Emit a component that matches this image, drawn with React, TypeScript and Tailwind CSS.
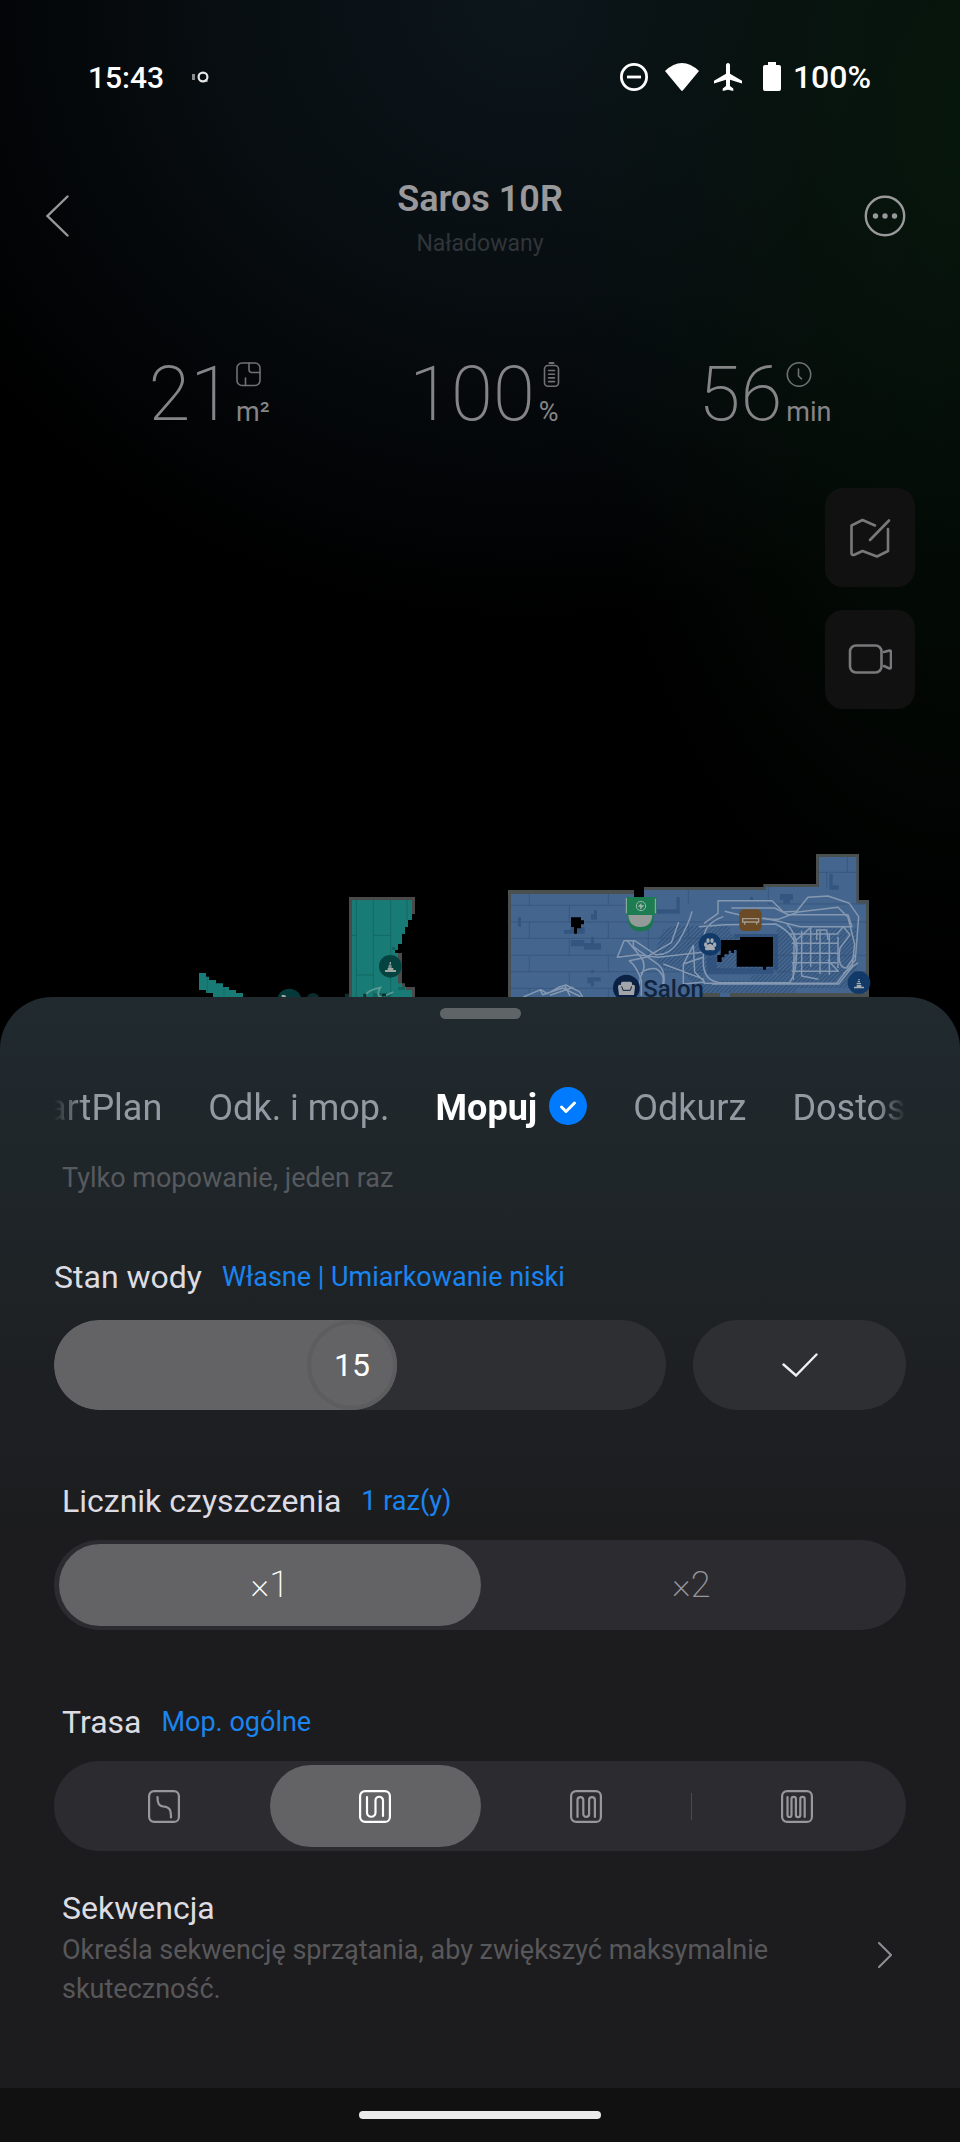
import { useState } from "react";
import type { ReactNode } from "react";

const tabs = ["SmartPlan", "Odk. i mop.", "Mopuj", "Odkurz", "Dostosuj"];

const StatusBar = () => (
  <div className="flex h-[154px] items-center justify-between pl-[88px] pr-[89px] font-medium text-white">
    <div className="flex items-center gap-7">
      <span className="text-[30px]">15:43</span>
      <svg width="18" height="12" viewBox="0 0 18 12" fill="none">
        <path d="M1.500 3v6" stroke="#8a8d90" strokeWidth="3" />
        <circle cx="11" cy="6" r="4.400" stroke="#e8e8e8" strokeWidth="2.200" />
        <path d="M13 8.500l2.500 2" stroke="#e8e8e8" strokeWidth="1.500" />
      </svg>
    </div>
    <div className="flex items-center">
      <svg width="28" height="28" viewBox="0 0 28 28" fill="none" stroke="#fff" strokeWidth="2.800">
        <circle cx="14" cy="14" r="12.600" />
        <path d="M7 14h14" />
      </svg>
      <svg className="ml-[17px]" width="34" height="28" viewBox="0 0 34 28" fill="#fff">
        <path d="M0 8Q17-8 34 8L18 27.300Q17 28.500 16 27.300Z" />
      </svg>
      <svg className="ml-[15px]" width="28" height="29" viewBox="0 0 28 29" fill="#fff">
        <path d="M14 0c1.300 0 2 1 2 2.300v8.500l12 7v2.700l-12-3.700v6.200l3.300 2.500V28L14 26.700 8.700 28v-2.500L12 23v-6.200L0 20.500v-2.700l12-7V2.300C12 1 12.700 0 14 0z" />
      </svg>
      <svg className="ml-[21px]" width="18" height="30" viewBox="0 0 18 30" fill="#fff">
        <path d="M5 0h8v3h3a2 2 0 0 1 2 2v22a2 2 0 0 1-2 2H2a2 2 0 0 1-2-2V5a2 2 0 0 1 2-2h3z" />
      </svg>
      <span className="ml-3 text-[32px]">100%</span>
    </div>
  </div>
);

const Header = () => (
  <header className="flex h-[124px] items-center justify-between px-[46px] text-[#99999b]">
    <button aria-label="Wstecz" className="flex w-[60px] justify-start">
      <svg width="23" height="42" viewBox="0 0 23 42" fill="none" stroke="currentColor" strokeWidth="2.400" strokeLinecap="round">
        <path d="M21.500 1.500L1.500 21l20 19.500" />
      </svg>
    </button>
    <div className="pt-1.5 text-center">
      <h1 className="text-[36px] leading-[42px] font-semibold">Saros 10R</h1>
      <p className="mt-2 text-[23px] leading-8 text-[#303539]">Naładowany</p>
    </div>
    <button aria-label="Więcej" className="flex w-[60px] justify-end pr-2">
      <svg width="42" height="42" viewBox="0 0 42 42" fill="none">
        <circle cx="21" cy="21" r="19.200" stroke="currentColor" strokeWidth="2.400" />
        <g fill="currentColor">
          <circle cx="11.500" cy="21" r="2.700" />
          <circle cx="21" cy="21" r="2.700" />
          <circle cx="30.500" cy="21" r="2.700" />
        </g>
      </svg>
    </button>
  </header>
);

const Stat = ({ value, unit, children }: { value: string; unit: string; children: ReactNode }) => (
  <div className="flex justify-center gap-1 text-[#858588]">
    <span className="text-[76px] leading-[76px] font-extralight">{value}</span>
    <div className="flex flex-col items-start pt-1.5">
      <svg width="26" height="25" viewBox="0 0 26 25" fill="none" stroke="#717174" strokeWidth="1.600" strokeLinecap="round">
        {children}
      </svg>
      <span className="mt-3 text-[27px] leading-[27px]">{unit}</span>
    </div>
  </div>
);

const Stats = () => (
  <section className="mt-[78px] grid grid-cols-3 pl-[70px] pr-[56px]">
    <Stat value="21" unit="m²">
      <rect x="1" y="1" width="23" height="22.500" rx="5" />
      <path d="M13 1v6.500a3 3 0 0 0 3 3h8M9.500 23.500V16" />
    </Stat>
    <Stat value="100" unit="%">
      <rect x="5.500" y="3.500" width="14" height="20.700" rx="3.500" />
      <path d="M10.500 1h4" strokeWidth="2" />
      <path d="M9.500 8.500h6M9.500 12.200h6M9.500 15.900h6M9.500 19.600h6" />
    </Stat>
    <Stat value="56" unit="min">
      <circle cx="13" cy="12.500" r="11.700" />
      <path d="M12.500 7v7l3 2.800" />
    </Stat>
  </section>
);

const SideButton = ({ label, children }: { label: string; children: ReactNode }) => (
  <button aria-label={label} className="flex h-[99px] w-[90px] items-center justify-center rounded-[18px] bg-[#111111]">
    <svg width="44" height="40" viewBox="0 0 44 40" fill="none" stroke="#79797c" strokeWidth="2.600" strokeLinecap="round" strokeLinejoin="round">
      {children}
    </svg>
  </button>
);

const FloorMap = () => (
  <svg className="mt-[138px] block w-full" viewBox="0 847 960 150">
    <defs>
      <pattern id="hatch" width="9" height="9" patternUnits="userSpaceOnUse" patternTransform="rotate(45)">
        <path d="M0 0V9" stroke="#2c4b73" strokeWidth="5" />
      </pattern>
    </defs>

    {/* hallway */}
    <g transform="translate(180 840) scale(0.33333)">
      <path fill="#197b75" d="M57 399h21v11h9v10h21v10h21v11h18v9h21v9h21v12H99v-12H78v-9H57z" />
      <path stroke="#136660" strokeWidth="2" d="M82 412v47M132 441v30" />
      <path fill="#4a4a4a" d="M507 171h198v51h-9v-30H516v279h-9zM654 339h12v91h9v11h30v30h-30v-21h-21z" />
      <path fill="#197b75" d="M516 180h180v60h-12v21h-9v21h-9v30h-12v18h-9v9h9v91h12v10h12v10h18v21H516z" />
      <path fill="none" stroke="#12645f" strokeWidth="2.500" d="M529 180v291M580 180v291M632 180v291M681 180v60M516 286h13M580 286h52M529 405h51" />
      <path fill="#136660" d="M636 321h10v9h-10zM636 450h39v-9h-20v9zM580 459h52v12h-52z" />
      <path fill="none" stroke="#5d9c95" strokeWidth="5" d="M556 471c0-14 22-24 45-28-10 14-8 28 4 28M612 468l28-12" />
      <path fill="#07312f" d="M550 461h9v10h-9zM606 461h12v8h-12zM495 461h12v10h-12z" />
      <circle cx="631" cy="379" r="34" fill="#054341" />
      <path fill="#9da8a2" d="M615 390h8v-6h17v6h8v6h-33zM625 379h10v4h-10zM629 366h4v7h-4zM626 374h8v3h-8z" />
      <circle cx="328" cy="483" r="37" fill="#06393a" />
      <path fill="#9da8a2" d="M305 465h10l5 8h-15z" />
      <circle cx="399" cy="478" r="19" fill="#0b2c2c" />
    </g>

    {/* living room */}
    <g transform="translate(490 840) scale(0.33333)">
      <path fill="#4a4f50" d="M54 150h378v21h30v-30h358v-9h158V42h129v138h30v291H54z" />
      <path fill="#44658d" d="M63 162h369v9h30v-21h366v-9h159V51h112v140h29v268H720v12h-30v-12h-55v12H63z" />
      <g fill="none" stroke="#36557c" strokeWidth="2.500">
        <path d="M63 196h345M63 246h1065M63 295h680M63 346h620M63 395h580M63 445h310M835 192h293M987 97h112M850 346h278M850 395h278" />
        <path d="M118 162v34M355 162v34M595 150v42M835 141v51M1072 51v46M238 196v50M475 270v26M118 246v49M355 246v49M595 246v49M238 295v51M475 295v51M118 346v49M355 346v49M238 395v50M118 445v26M355 445v26M1010 97v49" />
      </g>
      <path fill="#335680" d="M84 232h9v28h-9zM303 222h9v-11h9v28h-18zM560 171h9v50h-68v-13h59zM243 300h40v9h20v-18h9v19h21v19h-51v-10h-39zM870 162h39v18h-9v11h-20v-11h-10zM1018 102h10v34h18v13h-28zM292 412h40v12h-20v15h-9v-9h-11zM222 270h20v-9h42v20h-62zM780 171h9v9h-9zM303 390h9v9h-9z" />
      <path fill="url(#hatch)" d="M520 270l30-12h170v24h140v110h-180l-40 0v30h280v36H640l-60-60-80-20v-60zM860 265h240v180H780v-40h80z" />
      <path fill="#2b4d78" opacity=".7" d="M650 350h30v35h170v18H650zM735 282h130v12H735zM850 290h14v100h-14z" />
      <path fill="#000" d="M243 232h30v9h9v12h-9v12h-12v16h-9v-20h-9zM693 300h57v-9h99v89h-21v9h-9v-9h-79v-50h-8v9h-8v-7h-8v11h-13v9h-8v14h-13v-21h10z" />

      {/* robot trail */}
      <g fill="none" stroke="#8598b1" strokeWidth="4.500" strokeLinejoin="round">
        <path d="M642 250l42-30 0-38h162l34 34 40-2 34-42 60-4 64 22 28 40-10 130-36 44-20 26H640" />
        <path d="M627 260l80-6 150-2q60 30 62 80 4 60-20 96H690q-46-4-50-54V300q2-50 60-70" />
        <path d="M704 214q90 24 160 24l60-22 120-14 30 30 20 80-8 70-40 50H665" />
        <path d="M724 204h130l40 20h180l12 36H930q-50-14-110-26" />
        <path d="M606 214q-10 40-40 90-30 44-70 40l-62-42-32 0-20 50 60-8 62 8 140-16M566 246l-22 62-76 44-50 10q24 20 36 60v46" />
        <path d="M410 300l42 50q20 24 0 60l-6 30M430 300v20l70 50q30 20 20 70M452 400q18-16 46-14 30 18 20 50M580 372l30-56 4 80 30 30-64 6 0-60 60-20M520 372l122 46" />
        <path d="M912 280v110M935 272v136l50 10M962 260v120M990 272v130M1018 284v120M1044 290v94M900 282h140M905 310h140M905 340h140M905 368h136M905 394h140l-32-34" />
        <path d="M920 300l40-36M980 300l0-30h30l4 30M1040 284l20-24 20 24-30 40q-10 60 20 60l26-40M1060 400l44-32M890 250q50 60 20 120l0 50" />
        <path d="M100 471l52-22 20 12 36-20 20-6 40 20 10 16M150 450l8 14 60-20 54 26M180 466l70-24M224 436l16 32" />
      </g>

      {/* dock */}
      <path fill="#1b774e" d="M414 222h76v22q-4 30-38 30t-38-34z" />
      <path fill="#939a97" d="M415 225h72q-2 36-36 36t-36-36z" />
      <rect x="409" y="171" width="90" height="54" rx="4" fill="#1c7d52" />
      <path fill="none" stroke="#9cb5a8" strokeWidth="3" d="M409 174v46M496 176v44" />
      <circle cx="453" cy="198" r="14" fill="none" stroke="#9cb5a8" strokeWidth="3" />
      <path fill="#9cb5a8" d="M455 188l-12 12h8l-1 9 13-13h-9z" />

      {/* furniture and obstacle pins */}
      <rect x="748" y="208" width="67" height="65" rx="14" fill="#6b4b26" />
      <path fill="none" stroke="#a29c92" strokeWidth="4" d="M758 236h48v10h-48zM764 246v8M800 246v8" />
      <circle cx="660" cy="313" r="34" fill="#123a68" />
      <g fill="#a5abb0">
        <ellipse cx="647" cy="314" rx="5" ry="7" />
        <ellipse cx="654" cy="302" rx="5" ry="7" />
        <ellipse cx="666" cy="302" rx="5" ry="7" />
        <ellipse cx="674" cy="314" rx="5" ry="7" />
        <path d="M660 311c8 0 16 12 15 17-2 5-9 2-15 2s-13 3-15-2c-1-5 7-17 15-17z" />
      </g>
      <circle cx="1107" cy="428" r="34" fill="#123a68" />
      <path fill="#a5abb0" d="M1092 440h8v-5h14v5h8v5h-30zM1100 429h13v4h-13zM1103 423h7v4h-7zM1105 417h4v4h-4z" />
      <circle cx="409" cy="444" r="40" fill="#0b2143" />
      <path fill="#a3a5a8" d="M393 430q0-5 5-5h23q5 0 5 5v5q8-3 9 5l-3 25h-45l-3-25q1-8 9-5z" />
      <path fill="none" stroke="#0b2143" strokeWidth="3" d="M395 439l4 12h22l4-12" />
      <text x="460" y="470" fontSize="72" className="font-medium" fill="#10233f">
        Salon
      </text>
    </g>
  </svg>
);

const ModeTabs = () => {
  const [active, setActive] = useState("Mopuj");

  return (
    <div className="mx-[54px] mt-[65px] overflow-hidden [mask-image:linear-gradient(to_right,transparent,#000_30px,#000_calc(100%-30px),transparent)]">
      <div className="-ml-[60px] flex gap-[46px] whitespace-nowrap text-[36px] leading-[48px]">
        {tabs.map((tab) => (
          <button
            key={tab}
            onClick={() => setActive(tab)}
            className={tab === active ? "flex items-center gap-3 font-bold text-white" : "text-[#959aa2]"}
          >
            {tab}
            {tab === active && (
              <svg width="38" height="38" viewBox="0 0 38 38" className="mb-1">
                <circle cx="19" cy="19" r="19" fill="#007aff" />
                <path d="M12.500 20l4.500 4.500 8.500-8.500" fill="none" stroke="#fff" strokeWidth="3" strokeLinecap="round" strokeLinejoin="round" />
              </svg>
            )}
          </button>
        ))}
      </div>
    </div>
  );
};

const SettingTitle = ({ title, value }: { title: string; value: string }) => (
  <div className="flex items-center gap-5 leading-10">
    <h2 className="text-[32px] text-[#dcdce2]">{title}</h2>
    <span className="text-[27px] text-[#1a84f0]">{value}</span>
  </div>
);

const WaterLevel = () => {
  const [level, setLevel] = useState(15);

  return (
    <section className="mt-[61px] px-[54px]">
      <SettingTitle title="Stan wody" value="Własne | Umiarkowanie niski" />
      <div className="mt-[23px] flex gap-[27px]">
        <div className="relative h-[90px] grow overflow-hidden rounded-full bg-[#2e2f33]">
          <div
            className="flex h-full min-w-[90px] justify-end rounded-full bg-[#636365]"
            style={{ width: `${15 + ((level - 1) / 29) * 85}%` }}
          >
            <span className="flex size-[90px] items-center justify-center rounded-full border-4 border-[#5d5d5f] text-[32px] text-white">
              {level}
            </span>
          </div>
          <input
            type="range"
            aria-label="Stan wody"
            min={1}
            max={30}
            value={level}
            onChange={(e) => setLevel(Number(e.target.value))}
            className="absolute inset-0 h-full w-full cursor-pointer opacity-0"
          />
        </div>
        <button aria-label="Zatwierdź" className="flex h-[90px] w-1/4 items-center justify-center rounded-full bg-[#2e2f33]">
          <svg width="36" height="24" viewBox="0 0 36 24" fill="none" stroke="#f0f0f0" strokeWidth="2.400" strokeLinecap="round">
            <path d="M1.500 11.500L14 22.500 34.500 1.500" />
          </svg>
        </button>
      </div>
    </section>
  );
};

type SegmentProps = {
  name: string;
  label: string;
  checked: boolean;
  onSelect: () => void;
  divider?: boolean;
  children: ReactNode;
};

const Segment = ({ name, label, checked, onSelect, divider, children }: SegmentProps) => (
  <label
    className={`relative flex grow basis-0 cursor-pointer items-center justify-center rounded-full ${
      checked ? "bg-[#636365] text-white" : "text-[#97979c]"
    }`}
  >
    <input type="radio" name={name} aria-label={label} checked={checked} onChange={onSelect} className="sr-only" />
    {divider && <span className="absolute left-0 h-[27px] w-px bg-[#4b4b4f]" />}
    {children}
  </label>
);

const CleanCount = () => {
  const [count, setCount] = useState(1);

  return (
    <section className="mt-[71px] px-[54px]">
      <div className="pl-2">
        <SettingTitle title="Licznik czyszczenia" value={`${count} raz(y)`} />
      </div>
      <div className="mt-[19px] flex h-[90px] rounded-full bg-[#2c2b30] p-1 pl-[5px]">
        {[1, 2].map((n) => (
          <Segment key={n} name="count" label={`×${n}`} checked={count === n} onSelect={() => setCount(n)}>
            <span className="text-[36px] font-extralight">×{n}</span>
          </Segment>
        ))}
      </div>
    </section>
  );
};

const routes = [
  { label: "Szybka", value: "Mop. szybkie", path: "M9.500 7c0 6 1 9 6 9.500 6 .5 7.500 3 7.500 11" },
  { label: "Ogólna", value: "Mop. ogólne", path: "M8 7v15.500a4.250 4.250 0 0 0 8.500 0v-12a3.750 3.750 0 0 1 7.500 0V26" },
  { label: "Głęboka", value: "Mop. głębokie", path: "M7.500 27V10a2.900 2.900 0 0 1 5.800 0v14a2.900 2.900 0 0 0 5.800 0V10a2.900 2.900 0 0 1 5.800 0v17" },
  { label: "Głęboka+", value: "Mop. głębokie+", path: "M6.500 7v18a2 2 0 0 0 4 0V9a2.200 2.200 0 0 1 4.400 0v16a2.200 2.200 0 0 0 4.400 0V9a2.200 2.200 0 0 1 4.400 0v18" },
];

const Route = () => {
  const [selected, setSelected] = useState(1);

  return (
    <section className="mt-[72px] px-[54px]">
      <div className="pl-2">
        <SettingTitle title="Trasa" value={routes[selected].value} />
      </div>
      <div className="mt-[19px] flex h-[90px] rounded-full bg-[#2c2b30] p-1 pl-[5px]">
        {routes.map((route, i) => (
          <Segment
            key={route.label}
            name="route"
            label={route.label}
            checked={selected === i}
            onSelect={() => setSelected(i)}
            divider={i === 3}
          >
            <svg width="32" height="33" viewBox="0 0 32 33" fill="none" stroke="currentColor" strokeWidth="2.200" strokeLinecap="round">
              <rect x="1.100" y="1.100" width="29.800" height="30.800" rx="5" />
              <path d={route.path} />
            </svg>
          </Segment>
        ))}
      </div>
    </section>
  );
};

const Sequence = () => (
  <button className="mt-[37px] flex w-full items-center justify-between pl-[62px] pr-[68px] text-left">
    <span className="max-w-[740px]">
      <span className="block text-[32px] leading-10 text-[#dcdce2]">Sekwencja</span>
      <span className="mt-[3px] block text-[27px] leading-[39px] text-[#58585b]">
        Określa sekwencję sprzątania, aby zwiększyć maksymalnie skuteczność.
      </span>
    </span>
    <svg className="mt-3" width="14" height="26" viewBox="0 0 14 26" fill="none" stroke="#8e8e92" strokeWidth="2" strokeLinecap="round">
      <path d="M1 1l12 12L1 25" />
    </svg>
  </button>
);

export default function App() {
  return (
    <div className="flex min-h-screen flex-col bg-black font-['Roboto',sans-serif]">
      <div className="bg-[radial-gradient(ellipse_42%_85%_at_100%_12%,#07160c,transparent),radial-gradient(ellipse_70%_62%_at_55%_0%,#0c161b,#080e12_45%,transparent)]">
        <StatusBar />
        <Header />
        <Stats />
        <div className="mt-14 flex flex-col items-end gap-[23px] pr-[45px]">
          <SideButton label="Edytuj mapę">
            <path d="M27 7.500L14.500 2 3.500 7.500v28Q4 38 7 36.500l7.500-3.500L29 38.500l11-5.500V11M22 22L41 2.500" />
          </SideButton>
          <SideButton label="Kamera">
            <rect x="2" y="5.500" width="31.500" height="27" rx="6" />
            <path d="M36 12l5.500-1.500q1.500 0 1.500 1.500v15q0 1.500-1.500 1.500L36 26" />
          </SideButton>
        </div>
        <FloorMap />
      </div>

      <main className="grow rounded-t-[52px] bg-[#1c1c1e] bg-linear-to-b from-[#202a2f] to-[#1c1c1e] to-50% pt-[11px] pb-[79px]">
        <div className="mx-auto h-[11px] w-[81px] rounded-full bg-[#5f6567]" />
        <ModeTabs />
        <p className="mt-7 px-[62px] text-[27px] leading-9 text-[#565a5f]">Tylko mopowanie, jeden raz</p>
        <WaterLevel />
        <CleanCount />
        <Route />
        <Sequence />
      </main>

      <footer className="flex h-[54px] items-center justify-center bg-[#111111]">
        <div className="h-2 w-[242px] rounded-full bg-[#ebebeb]" />
      </footer>
    </div>
  );
}
